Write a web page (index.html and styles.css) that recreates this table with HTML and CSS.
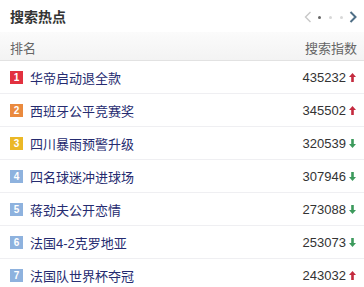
FILE: index.html
```html
<!DOCTYPE html>
<html>
<head>
<meta charset="utf-8">
<link rel="stylesheet" href="styles.css">
</head>
<body>
<div class="panel">
  <div class="top">
    <div class="title">搜索热点</div>
    <div class="pager">
      <svg class="chev" width="8" height="12" viewBox="0 0 8 12"><path d="M6.5 1 L1.5 6 L6.5 11" fill="none" stroke="#c8c8c8" stroke-width="1.4"/></svg>
      <span class="dot on"></span><span class="dot"></span><span class="dot"></span>
      <svg class="chev" width="8" height="12" viewBox="0 0 8 12"><path d="M1.5 1 L6.5 6 L1.5 11" fill="none" stroke="#4f6f86" stroke-width="2"/></svg>
    </div>
  </div>
  <div class="head">
    <span>排名</span>
    <span>搜索指数</span>
  </div>
  <ul class="list">
    <li class="row"><span class="badge b1">1</span><span class="name">华帝启动退全款</span><span class="num">435232</span><svg class="arr" width="7" height="9" viewBox="0 0 7 9"><path d="M3.5 0 L7 4 L4.8 4 L4.8 9 L2.2 9 L2.2 4 L0 4 Z" fill="#c42a3e"/></svg></li>
    <li class="row"><span class="badge b2">2</span><span class="name">西班牙公平竞赛奖</span><span class="num">345502</span><svg class="arr" width="7" height="9" viewBox="0 0 7 9"><path d="M3.5 0 L7 4 L4.8 4 L4.8 9 L2.2 9 L2.2 4 L0 4 Z" fill="#c42a3e"/></svg></li>
    <li class="row"><span class="badge b3">3</span><span class="name">四川暴雨预警升级</span><span class="num">320539</span><svg class="arr" width="7" height="9" viewBox="0 0 7 9"><path d="M3.5 9 L7 5 L4.8 5 L4.8 0 L2.2 0 L2.2 5 L0 5 Z" fill="#3c9a5c"/></svg></li>
    <li class="row"><span class="badge bn">4</span><span class="name">四名球迷冲进球场</span><span class="num">307946</span><svg class="arr" width="7" height="9" viewBox="0 0 7 9"><path d="M3.5 9 L7 5 L4.8 5 L4.8 0 L2.2 0 L2.2 5 L0 5 Z" fill="#3c9a5c"/></svg></li>
    <li class="row"><span class="badge bn">5</span><span class="name">蒋劲夫公开恋情</span><span class="num">273088</span><svg class="arr" width="7" height="9" viewBox="0 0 7 9"><path d="M3.5 9 L7 5 L4.8 5 L4.8 0 L2.2 0 L2.2 5 L0 5 Z" fill="#3c9a5c"/></svg></li>
    <li class="row"><span class="badge bn">6</span><span class="name">法国4-2克罗地亚</span><span class="num">253073</span><svg class="arr" width="7" height="9" viewBox="0 0 7 9"><path d="M3.5 9 L7 5 L4.8 5 L4.8 0 L2.2 0 L2.2 5 L0 5 Z" fill="#3c9a5c"/></svg></li>
    <li class="row"><span class="badge bn">7</span><span class="name">法国队世界杯夺冠</span><span class="num">243032</span><svg class="arr" width="7" height="9" viewBox="0 0 7 9"><path d="M3.5 0 L7 4 L4.8 4 L4.8 9 L2.2 9 L2.2 4 L0 4 Z" fill="#c42a3e"/></svg></li>
  </ul>
</div>
</body>
</html>
```
FILE: styles.css
```css
* { box-sizing: border-box; }
html, body { margin: 0; padding: 0; background: #fff; }
body {
  font-family: "Liberation Sans", "Noto Sans CJK SC", sans-serif;
  width: 364px;
  height: 287px;
  overflow: hidden;
}
.panel { width: 364px; }
.top {
  height: 32px;
  display: flex;
  align-items: center;
  justify-content: space-between;
  padding: 0 7px 0 10px;
}
.title {
  font-size: 14px;
  font-weight: bold;
  color: #333;
}
.pager {
  display: flex;
  align-items: center;
  gap: 4px;
  padding-top: 2px;
}
.chev { display: block; }
.dot {
  width: 3px; height: 3px;
  border-radius: 50%;
  background: #d8d8d8;
  margin: 0 2px;
}
.dot.on { background: #666; }
.head {
  height: 29px;
  display: flex;
  align-items: center;
  justify-content: space-between;
  padding: 2px 7px 0 10px;
  font-size: 13px;
  color: #666;
  background: linear-gradient(#fbfbfb, #f3f3f3);
  border-bottom: 1px solid #e2e2e2;
}
.list { list-style: none; margin: 0; padding: 0; }
.row {
  height: 33px;
  display: flex;
  align-items: center;
  padding: 0 8px 0 10px;
  border-bottom: 1px solid #efeff2;
}
.badge {
  width: 13px;
  height: 13px;
  display: flex;
  align-items: center;
  justify-content: center;
  font-size: 10px;
  font-weight: bold;
  color: #fff;
  margin-right: 7px;
}
.b1 { background: #e2313f; }
.b2 { background: #ea8a3e; }
.b3 { background: #ebb826; }
.bn { background: #8eb2de; }
.name {
  flex: 1;
  font-size: 13px;
  color: #252b70;
}
.num {
  font-size: 13px;
  color: #333;
  margin-right: 3px;
}
.arr { display: block; }
```
